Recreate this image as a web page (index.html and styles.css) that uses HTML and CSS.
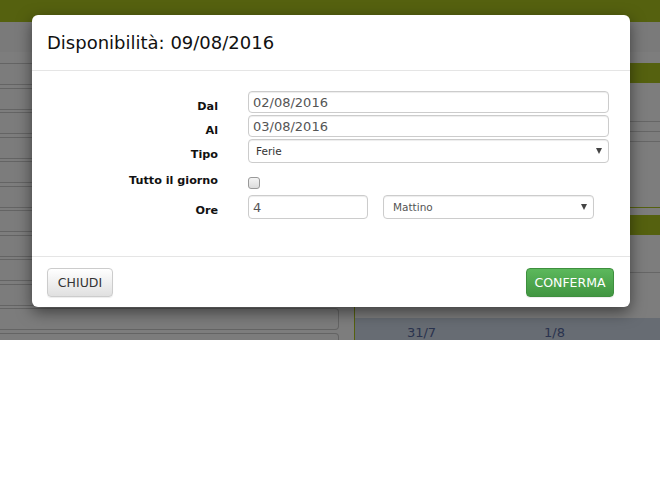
FILE: index.html
```html
<!DOCTYPE html>
<html lang="it">
<head>
    <meta charset="UTF-8">
    <meta name="viewport" content="width=device-width, initial-scale=1.0">
    <title>Disponibilità</title>
    <link rel="stylesheet" href="styles.css">
</head>
<body>
    <div class="app">
        <div class="topbar"></div>
        <div class="app-main">
            <div class="list">
                <div class="list-head"></div>
                <div class="list-row"></div>
                <div class="list-row"></div>
                <div class="list-row"></div>
                <div class="list-row"></div>
                <div class="list-row"></div>
                <div class="list-row"></div>
                <div class="list-row"></div>
                <div class="list-row"></div>
                <div class="list-row"></div>
                <div class="list-row"></div>
                <div class="list-row"></div>
                <div class="list-row"></div>
            </div>
            <div class="side">
                <div class="side-head"></div>
                <div class="side-band"></div>
                <div class="side-block">
                    <div class="side-line"></div>
                    <div class="side-line"></div>
                    <div class="side-line"></div>
                </div>
                <div class="side-band side-band-second"></div>
                <div class="side-block side-block-low">
                    <div class="side-line"></div>
                </div>
                <div class="days">
                    <div class="day">31/7</div>
                    <div class="day">1/8</div>
                    <div class="day"></div>
                </div>
            </div>
        </div>

        <div class="overlay"></div>

        <div class="modal">
            <div class="modal-header">
                <h4 class="modal-title">Disponibilità: 09/08/2016</h4>
            </div>
            <div class="modal-body">
                <div class="form-row">
                    <label class="form-label">Dal</label>
                    <input class="form-input" type="text" value="02/08/2016">
                </div>
                <div class="form-row">
                    <label class="form-label">Al</label>
                    <input class="form-input" type="text" value="03/08/2016">
                </div>
                <div class="form-row row-select">
                    <label class="form-label">Tipo</label>
                    <div class="select-wrap">
                        <select class="form-select">
                            <option>Ferie</option>
                        </select>
                    </div>
                </div>
                <div class="form-row row-check">
                    <label class="form-label">Tutto il giorno</label>
                    <input class="form-check" type="checkbox">
                </div>
                <div class="form-row row-select">
                    <label class="form-label">Ore</label>
                    <input class="form-input input-hours" type="text" value="4">
                    <div class="select-wrap select-time">
                        <select class="form-select">
                            <option>Mattino</option>
                        </select>
                    </div>
                </div>
            </div>
            <div class="modal-footer">
                <button class="btn btn-default">CHIUDI</button>
                <button class="btn btn-success">CONFERMA</button>
            </div>
        </div>
    </div>
</body>
</html>
```

FILE: styles.css
```css
body {
    margin: 0;
    background-color: white;
    font-family: "DejaVu Sans", Verdana, sans-serif;
}
.app {
    position: relative;
    height: 340px;
    overflow: hidden;
    background-color: #fafafa;
}
.topbar {
    height: 22px;
    background-color: #abc31e;
}
.app-main {
    display: flex;
    height: 318px;
}

/* left list behind the dialog */
.list {
    width: 339px;
    flex-shrink: 0;
}
.list-head {
    height: 30px;
    background-color: #f4f4f4;
    margin-bottom: 11px;
}
.list-row {
    height: 22px;
    margin-bottom: 2.5px;
    border: 1px solid #c8c8c8;
    border-left: none;
    border-radius: 0 4px 4px 0;
    background-color: #f8f8f8;
    box-sizing: border-box;
}

/* right panel behind the dialog */
.side {
    flex: 1;
    min-width: 0;
    overflow: hidden;
    margin-left: 15px;
    border-left: 1px solid #abc31e;
    display: flex;
    flex-direction: column;
}
.side-head {
    height: 30px;
    flex-shrink: 0;
    margin-bottom: 11px;
    background-color: #f4f4f4;
}
.side-band {
    height: 20px;
    flex-shrink: 0;
    background-color: #abc31e;
}
.side-band-second {
    box-shadow: 0 -7px 0 #fafafa, 0 -8px 0 #abc31e;
}
.side-block {
    height: 132px;
    flex-shrink: 0;
    padding-top: 38px;
    box-sizing: border-box;
}
.side-block-low {
    height: 83px;
    padding-top: 37px;
}
.side-line {
    height: 9px;
    border-top: 1px solid #cccccc;
}
.days {
    flex: 1;
    display: flex;
    background-color: #ced8e6;
}
.day {
    width: 133px;
    flex-shrink: 0;
    text-align: center;
    padding-top: 8px;
    font-size: 13px;
    line-height: 13px;
    color: #55679c;
}

.overlay {
    position: absolute;
    top: 0;
    left: 0;
    right: 0;
    bottom: 0;
    background-color: rgba(0, 0, 0, 0.5);
}

/* dialog */
.modal {
    position: absolute;
    top: 15px;
    left: 32px;
    width: 598px;
    background-color: white;
    border-radius: 6px;
    box-shadow: 0 5px 15px rgba(0, 0, 0, 0.5);
}
.modal-header {
    padding: 15px;
    border-bottom: 1px solid #e5e5e5;
}
.modal-title {
    margin: 0;
    font-size: 18px;
    font-weight: normal;
    line-height: 25px;
    color: #111;
}
.modal-body {
    padding: 20px 21px 37px 15px;
    display: flex;
    flex-direction: column;
    gap: 2px;
}
.form-row {
    display: flex;
    align-items: flex-start;
    height: 22px;
}
.row-select {
    height: 24px;
}
.row-check {
    height: 28px;
}
.form-label {
    width: 171px;
    margin-right: 30px;
    text-align: right;
    font-size: 11.2px;
    font-weight: bold;
    line-height: 17px;
    padding-top: 7px;
    color: #111;
    box-sizing: border-box;
}
.form-input {
    flex: 1;
    height: 22px;
    margin: 0;
    padding: 0 4px;
    border: 1px solid #cccccc;
    border-radius: 4px;
    box-shadow: inset 0 1px 1px rgba(0, 0, 0, 0.075);
    box-sizing: border-box;
    font-family: inherit;
    font-size: 13px;
    color: #555;
}
.row-select .form-input {
    height: 24px;
}
.input-hours {
    flex: 0 0 120px;
    width: 120px;
    margin-right: 15px;
}
.select-wrap {
    position: relative;
    flex: 1;
    height: 24px;
}
.select-time {
    flex: 0 0 211px;
}
.select-wrap::after {
    content: "";
    position: absolute;
    right: 7px;
    top: 9px;
    border-left: 3.5px solid transparent;
    border-right: 3.5px solid transparent;
    border-top: 6px solid #444;
}
.form-select {
    appearance: none;
    width: 100%;
    height: 24px;
    margin: 0;
    padding: 0 0 0 7px;
    border: 1px solid #cccccc;
    border-radius: 4px;
    background-color: white;
    box-shadow: inset 0 1px 1px rgba(0, 0, 0, 0.075);
    font-family: inherit;
    font-size: 10.5px;
    color: #333;
}
.select-time .form-select {
    padding-left: 9px;
    color: #555;
}
.form-check {
    appearance: none;
    width: 12px;
    height: 12px;
    margin: 12px 0 0 0;
    border: 1px solid #999;
    border-radius: 3px;
    background: linear-gradient(#f4f4f4, #dcdcdc);
}
.modal-footer {
    display: flex;
    justify-content: space-between;
    padding: 11px 16px 10px 15px;
    border-top: 1px solid #e5e5e5;
}
.btn {
    height: 29px;
    padding: 0;
    border-radius: 4px;
    font-family: inherit;
    font-size: 12.5px;
    cursor: pointer;
}
.btn-default {
    width: 66px;
    color: #333;
    border: 1px solid #cccccc;
    background: linear-gradient(#ffffff, #e0e0e0);
    box-shadow: 0 1px 1px rgba(0, 0, 0, 0.075);
}
.btn-success {
    width: 88px;
    color: white;
    border: 1px solid #3e8f3e;
    background: linear-gradient(#5cb85c, #419641);
    box-shadow: 0 1px 1px rgba(0, 0, 0, 0.075);
}
```
